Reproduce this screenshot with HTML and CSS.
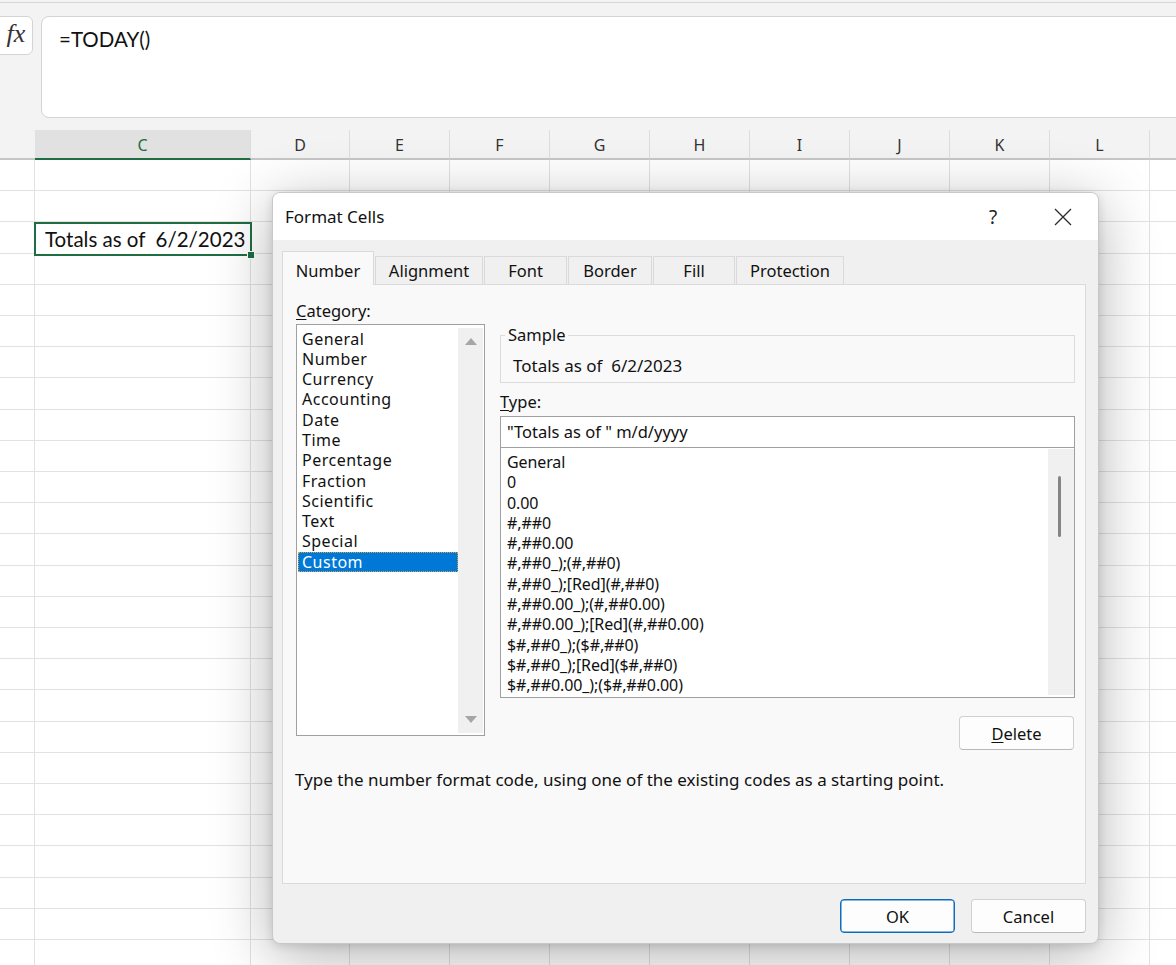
FILE: index.html
```html
<!DOCTYPE html>
<html>
<head>
<meta charset="utf-8">
<title>Format Cells</title>
<link rel="stylesheet" href="styles.css">
</head>
<body>
<div class="app">
  <div class="topbar">
    <div class="topline"></div>
    <div class="fx-row">
      <div class="fx-btn"><span class="fx">fx</span></div>
      <div class="formula">=TODAY()</div>
    </div>
  </div>
  <div class="col-headers">
    <div class="ch ch-a"></div>
    <div class="ch ch-c sel">C</div>
    <div class="ch ch-d">D</div>
    <div class="ch">E</div>
    <div class="ch">F</div>
    <div class="ch">G</div>
    <div class="ch">H</div>
    <div class="ch">I</div>
    <div class="ch">J</div>
    <div class="ch">K</div>
    <div class="ch">L</div>
    <div class="ch ch-rest"></div>
  </div>
  <div class="grid">
    <div class="gc gc-a"></div>
    <div class="gc gc-c">
      <div class="cell-sel"><span class="cell-text">Totals as of  6/2/2023</span><span class="handle"></span></div>
    </div>
    <div class="gc gc-d"></div>
    <div class="gc"></div>
    <div class="gc"></div>
    <div class="gc"></div>
    <div class="gc"></div>
    <div class="gc"></div>
    <div class="gc"></div>
    <div class="gc"></div>
    <div class="gc"></div>
    <div class="gc gc-rest"></div>
  </div>
</div>

<div class="dialog">
  <div class="dlg-title">
    <span class="dlg-name">Format Cells</span>
    <span class="dlg-help">?</span>
    <span class="dlg-close">
      <svg width="18" height="18" viewBox="0 0 18 18"><path d="M1 1 L17 17 M17 1 L1 17" stroke="#2b2b2b" stroke-width="1.3" fill="none"/></svg>
    </span>
  </div>
  <div class="dlg-body">
    <div class="tabs">
      <div class="tab active t-number">Number</div>
      <div class="tab t-align">Alignment</div>
      <div class="tab t-font">Font</div>
      <div class="tab t-border">Border</div>
      <div class="tab t-fill">Fill</div>
      <div class="tab t-prot">Protection</div>
    </div>
    <div class="panel">
      <div class="panel-main">
        <div class="cat">
          <div class="label"><u>C</u>ategory:</div>
          <div class="listbox">
            <div class="list-items">
              <div class="li">General</div>
              <div class="li">Number</div>
              <div class="li">Currency</div>
              <div class="li">Accounting</div>
              <div class="li">Date</div>
              <div class="li">Time</div>
              <div class="li">Percentage</div>
              <div class="li">Fraction</div>
              <div class="li">Scientific</div>
              <div class="li">Text</div>
              <div class="li">Special</div>
              <div class="li sel">Custom</div>
            </div>
            <div class="vscroll"><span class="arr up"></span><span class="arr down"></span></div>
          </div>
        </div>
        <div class="right">
          <fieldset class="sample">
            <legend>Sample</legend>
            <div class="sample-val">Totals as of  6/2/2023</div>
          </fieldset>
          <div class="label type-label"><u>T</u>ype:</div>
          <div class="type-input">"Totals as of " m/d/yyyy</div>
          <div class="typelist">
            <div class="type-items">
              <div class="ti">General</div>
              <div class="ti">0</div>
              <div class="ti">0.00</div>
              <div class="ti">#,##0</div>
              <div class="ti">#,##0.00</div>
              <div class="ti">#,##0_);(#,##0)</div>
              <div class="ti">#,##0_);[Red](#,##0)</div>
              <div class="ti">#,##0.00_);(#,##0.00)</div>
              <div class="ti">#,##0.00_);[Red](#,##0.00)</div>
              <div class="ti">$#,##0_);($#,##0)</div>
              <div class="ti">$#,##0_);[Red]($#,##0)</div>
              <div class="ti">$#,##0.00_);($#,##0.00)</div>
            </div>
            <div class="vscroll2"><span class="thumb"></span></div>
          </div>
          <div class="del-row"><button class="btn"><u>D</u>elete</button></div>
        </div>
      </div>
      <div class="desc">Type the number format code, using one of the existing codes as a starting point.</div>
    </div>
    <div class="footer">
      <button class="btn ok">OK</button>
      <button class="btn">Cancel</button>
    </div>
  </div>
</div>
</body>
</html>
```

FILE: styles.css
```css
* { box-sizing: border-box; }
html, body { margin: 0; padding: 0; }
body {
  width: 1176px;
  height: 965px;
  overflow: hidden;
  position: relative;
  background: #ffffff;
  font-family: "Noto Sans", "Open Sans", sans-serif;
  color: #111;
}

/* ---------- spreadsheet ---------- */
.topbar { height: 130px; background: #f3f3f3; padding-top: 2px; }
.topline { height: 1px; background: #d6d6d6; }
.fx-row { display: flex; gap: 8px; margin-top: 13px; align-items: flex-start; }
.fx-btn {
  width: 39px; height: 39px; margin-left: -6px; padding-left: 5px;
  background: #fff; border: 1px solid #d4d4d4; border-radius: 6px;
  display: flex; align-items: center; justify-content: center;
}
.fx { font-family: "Liberation Serif", serif; font-style: italic; font-size: 26px; color: #333; line-height: 1; margin-top: -3px; }
.formula {
  flex: 1; height: 102px; margin-right: -10px;
  background: #fff; border: 1px solid #d4d4d4; border-radius: 8px;
  padding: 10px 17px; font-family: Lato, "Open Sans", sans-serif; font-size: 20.5px; line-height: 24px; color: #111;
}

.col-headers { display: flex; height: 30px; background: #f3f3f3; }
.ch {
  width: 100px; height: 30px; border-right: 1px solid #dcdcdc; border-bottom: 2px solid #c6c6c6;
  display: flex; align-items: center; justify-content: center;
  font-size: 16px; color: #333; padding-top: 1px;
}
.ch-a { width: 35px; border-right: none; }
.ch-c { width: 216px; }
.ch-d { width: 99px; }
.ch-rest { flex: 1; border-right: none; }
.ch.sel { background: #e1e1e1; color: #1e6e42; border-bottom-color: #1e6e42; }

.grid { display: flex; height: 805px; }
.gc {
  width: 100px; height: 100%; border-right: 1px solid #e1e1e1;
  background-image: repeating-linear-gradient(to bottom, transparent 0, transparent 30.2px, #e2e2e2 30.2px, #e2e2e2 31.2px);
}
.gc-a { width: 35px; }
.gc-c { width: 216px; }
.gc-d { width: 99px; }
.gc-rest { flex: 1; border-right: none; }
.cell-sel {
  position: relative; margin-top: 62px; margin-left: -1px; width: 218px; height: 34px;
  border: 2px solid #1e6e42; background: #fff;
  padding-left: 9px; display: flex; align-items: center;
  font-family: Lato, "Open Sans", sans-serif; font-size: 20.5px; color: #111;
}
.cell-text { white-space: pre; }
.handle {
  position: absolute; right: -5px; bottom: -5px; width: 8px; height: 8px;
  background: #1e6e42; border: 1px solid #fff;
}

/* ---------- dialog ---------- */
.dialog {
  position: absolute; left: 272px; top: 192px; width: 827px;
  background: #f0f0f0; border: 1px solid #c8c8c8; border-radius: 8px;
  box-shadow: 0 12px 60px rgba(0,0,0,0.30), 0 2px 10px rgba(0,0,0,0.12);
  overflow: hidden;
}
.dlg-title { height: 47px; background: #fff; display: flex; align-items: center; padding-left: 12px; padding-right: 12px; }
.dlg-name { flex: 1; font-size: 17px; color: #111; }
.dlg-help { width: 40px; margin-right: 27px; text-align: center; font-size: 19px; color: #222; }
.dlg-close { width: 46px; display: flex; justify-content: center; align-items: center; }

.dlg-body { padding: 11px 12px 10px 9px; }
.tabs { display: flex; align-items: flex-end; height: 33px; }
.tab {
  height: 28px; margin-right: 1px; border: 1px solid #dadada; border-bottom: none;
  background: #f0f0f0; display: flex; align-items: center; justify-content: center;
  font-size: 16.5px; color: #111;
}
.tab.active { height: 34px; margin-bottom: -1px; padding-top: 4px; background: #f9f9f9; position: relative; z-index: 1; }
.t-number { width: 92px; }
.t-align { width: 108px; }
.t-font { width: 83px; }
.t-border { width: 84px; }
.t-fill { width: 82px; }
.t-prot { width: 108px; }

.panel { height: 600px; background: #f9f9f9; border: 1px solid #dadada; padding: 16px 10px 0 13px; }
.panel-main { display: flex; align-items: flex-start; }
.label { font-size: 16.5px; line-height: 20px; height: 20px; }
.label u { text-underline-offset: 2px; }
.cat { width: 189px; }
.cat .label { margin-bottom: 3px; }
.listbox { height: 412px; background: #fff; border: 1px solid #a0a0a0; display: flex; }
.list-items { flex: 1; padding: 3.5px 0 0 1px; }
.li { font-size: 16px; letter-spacing: 0.5px; line-height: 20.3px; height: 20.3px; padding-left: 4px; color: #111; white-space: nowrap; }
.li.sel { background: #0078d7; color: #fff; outline: 1px dotted #d9a441; outline-offset: -1px; }
.vscroll {
  width: 25px; margin: 3px 1px 2px 0; background: #f0f0f0;
  display: flex; flex-direction: column; justify-content: space-between; align-items: center;
  padding: 9.5px 0 10.5px;
}
.arr { width: 0; height: 0; border-left: 6px solid transparent; border-right: 6px solid transparent; }
.arr.up { border-bottom: 7px solid #a6a6a6; }
.arr.down { border-top: 7px solid #a6a6a6; }

.right { width: 575px; margin-left: 15px; margin-top: 24px; }
.sample { margin: 0; padding: 0 0 5px 12px; border: 1px solid #dcdcdc; height: 58px; }
.sample legend { font-size: 16.5px; line-height: 20px; padding: 0 3px; margin-left: -8px; }
.sample-val { font-size: 17px; line-height: 20px; margin-top: 11px; white-space: pre; }
.type-label { margin-top: 9px; margin-bottom: 4px; }
.type-input {
  height: 32px; background: #fff; border: 1px solid #a0a0a0; padding-left: 6px;
  font-size: 16.5px; line-height: 30px; white-space: pre;
}
.typelist { height: 250px; margin-top: 0; background: #fff; border: 1px solid #a0a0a0; border-top: none; display: flex; }
.type-items { flex: 1; padding: 4px 0 0 6px; }
.ti { font-size: 16px; line-height: 20.3px; height: 20.3px; white-space: pre; letter-spacing: -0.1px; }
.vscroll2 { width: 26px; margin: 1px 0 2px 0; background: #f0f0f0; padding: 27px 0 0 10px; }
.thumb { display: block; width: 3px; height: 61px; background: #858585; border-radius: 2px; }
.del-row { display: flex; justify-content: flex-end; margin-top: 18px; margin-right: 1px; }

.btn {
  width: 115px; height: 34px; background: #fdfdfd; border: 1px solid #d0d0d0; border-bottom-color: #b8b8b8;
  border-radius: 4px; font-family: "Noto Sans", "Open Sans", sans-serif; font-size: 16.5px; color: #111; padding: 0;
}
.btn u { text-underline-offset: 2px; }
.btn.ok { border: 1px solid #0f6cbd; box-shadow: inset 0 0 0 0.5px #0f6cbd; }

.desc { margin-top: 20px; margin-left: -1px; font-size: 17px; line-height: 20px; }

.footer { display: flex; justify-content: flex-end; gap: 16px; padding-top: 15px; }
```
